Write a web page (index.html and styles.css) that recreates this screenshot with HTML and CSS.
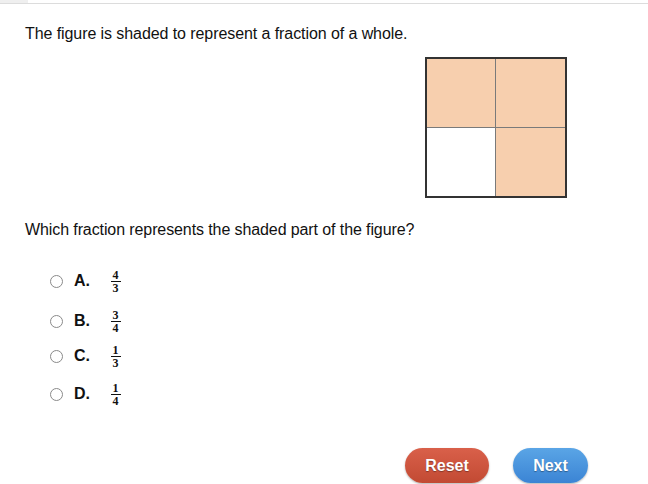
FILE: index.html
```html
<!DOCTYPE html>
<html>
<head>
<meta charset="utf-8">
<link rel="stylesheet" href="styles.css">
</head>
<body>
<div class="topbar"><div class="tab"></div></div>
<div class="content">
  <p class="prompt">The figure is shaded to represent a fraction of a whole.</p>
  <div class="figure-row">
    <div class="grid">
      <div class="cell shaded"></div>
      <div class="cell shaded"></div>
      <div class="cell"></div>
      <div class="cell shaded"></div>
    </div>
  </div>
  <p class="question">Which fraction represents the shaded part of the figure?</p>
  <ul class="options">
    <li class="opt opt-a"><span class="radio"></span><span class="letter">A.</span><span class="frac"><span class="num">4</span><span class="den">3</span></span></li>
    <li class="opt opt-b"><span class="radio"></span><span class="letter">B.</span><span class="frac"><span class="num">3</span><span class="den">4</span></span></li>
    <li class="opt opt-c"><span class="radio"></span><span class="letter">C.</span><span class="frac"><span class="num">1</span><span class="den">3</span></span></li>
    <li class="opt opt-d"><span class="radio"></span><span class="letter">D.</span><span class="frac"><span class="num">1</span><span class="den">4</span></span></li>
  </ul>
  <div class="actions">
    <button class="btn reset">Reset</button>
    <button class="btn next">Next</button>
  </div>
</div>
</body>
</html>
```
FILE: styles.css
```css
* { box-sizing: border-box; }
html, body { margin: 0; padding: 0; background: #fff; }
body {
  font-family: "Liberation Sans", Arial, sans-serif;
  color: #111;
  width: 648px;
  height: 484px;
  overflow: hidden;
}
.topbar {
  height: 4px;
  border-bottom: 1px solid #dcdcdc;
}
.tab {
  width: 28px;
  height: 3px;
  background: #efefef;
}
.content {
  padding: 0 0 0 25px;
}
.prompt {
  margin: 0;
  padding-top: 20px;
  font-size: 16px;
  line-height: 20px;
  letter-spacing: -0.08px;
}
.figure-row {
  display: flex;
  justify-content: flex-end;
  padding-right: 81px;
  margin-top: 13px;
}
.grid {
  width: 142px;
  height: 141px;
  border: 2px solid #333;
  display: grid;
  grid-template-columns: 1fr 1fr;
  grid-template-rows: 1fr 1fr;
  background: #fff;
}
.cell {
  border-right: 1px solid #7a7a7a;
  border-bottom: 1px solid #7a7a7a;
}
.cell:nth-child(2n) { border-right: none; }
.cell:nth-child(n+3) { border-bottom: none; }
.shaded { background: #f7cfae; }
.question {
  margin: 0;
  margin-top: 22px;
  font-size: 16px;
  line-height: 20px;
  letter-spacing: -0.1px;
}
.options {
  list-style: none;
  margin: 0;
  padding: 0 0 0 25px;
  margin-top: 29px;
}
.opt {
  display: flex;
  align-items: center;
  height: 24px;
}
.opt-a { margin-top: 0; }
.opt-b { margin-top: 16px; }
.opt-c { margin-top: 11px; }
.opt-d { margin-top: 14px; }
.radio {
  width: 13px;
  height: 13px;
  border: 1px solid #8a8a8a;
  border-radius: 50%;
  background: #fff;
  margin-right: 11px;
}
.letter {
  font-weight: bold;
  font-size: 16px;
  width: 36px;
}
.frac {
  display: inline-flex;
  flex-direction: column;
  align-items: center;
  font-family: "Liberation Serif", "Times New Roman", serif;
  font-weight: bold;
  font-size: 12px;
  line-height: 10px;
  width: 11px;
}
.num {
  border-bottom: 1px solid #111;
  padding: 0 2px 1px;
}
.den { padding-top: 1px; }
.actions {
  display: flex;
  gap: 24px;
  padding-left: 380px;
  margin-top: 42px;
}
.btn {
  font-family: "Liberation Sans", Arial, sans-serif;
  font-weight: bold;
  font-size: 16px;
  color: #fff;
  border: none;
  border-radius: 18px;
  height: 35px;
  text-shadow: 0 1px 1px rgba(0,0,0,0.35);
  box-shadow: 0 1px 2px rgba(0,0,0,0.3);
}
.reset {
  width: 84px;
  background: linear-gradient(#d9604a, #c24a33);
}
.next {
  width: 75px;
  background: linear-gradient(#5aa5e6, #3b84d4);
}
```
